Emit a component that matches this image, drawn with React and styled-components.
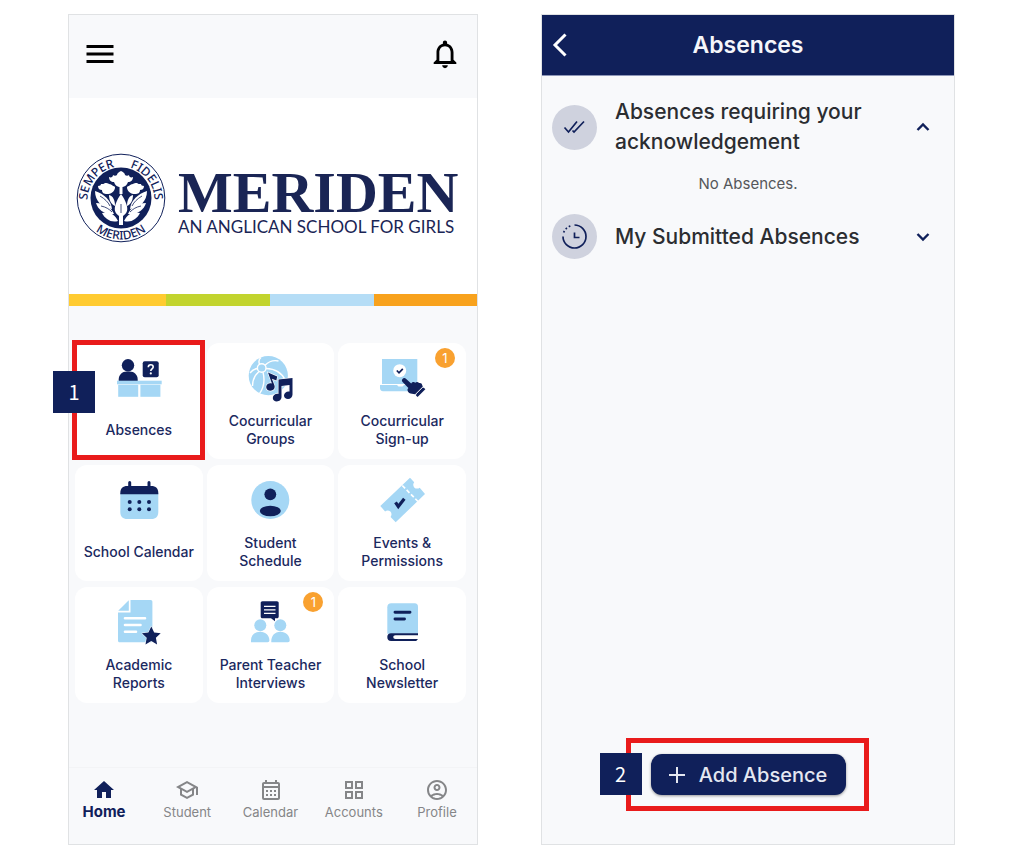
import { useState } from "react";
import styled, { createGlobalStyle } from "styled-components";
import {
  MdMenu,
  MdNotificationsNone,
  MdHome,
  MdOutlineSchool,
  MdOutlineCalendarMonth,
  MdOutlineGridView,
  MdOutlineAccountCircle,
} from "react-icons/md";

const navy = "#10205a";
const sky = "#a5d7f5";

const AbsencesIcon = () => (
  <svg viewBox="0 0 48 48">
    <circle cx="13" cy="11.3" r="6.2" fill={navy} />
    <path d="M3.7 27v-1.500c0-4.500 3.500-8 8-8h3c4.500 0 8 3.500 8 8V27z" fill={navy} />
    <rect x="27.7" y="7.3" width="16" height="16" rx="2" fill={navy} />
    <path d="M33.300 13.200c0-1.500 1-2.400 2.400-2.400s2.500.9 2.500 2.200c0 1.900-2.400 2-2.400 4" fill="none" stroke="#fff" strokeWidth="1.6" />
    <circle cx="35.8" cy="19.4" r="1.1" fill="#fff" />
    <rect x="2" y="26.7" width="44.7" height="3.6" fill={sky} />
    <rect x="3.2" y="30.8" width="20" height="12" fill={sky} />
    <rect x="25.4" y="30.8" width="20" height="12" fill={sky} />
  </svg>
);

const GroupsIcon = () => (
  <svg viewBox="0 0 48 48">
    <circle cx="22.3" cy="21.7" r="19.6" fill={sky} />
    <g fill="none" stroke="#fff" strokeWidth="1.4">
      <circle cx="15.7" cy="14" r="4.3" />
      <path d="M13.5 10.2C12.5 7.5 13 5 15 3.5M19 11.3c4-4 9-5.3 13.5-4.3M20 14.5c9 .2 16 4.5 19.5 12M17 18.2c2 8 .5 16-3.5 21.5M13 17.5C9 21 6.5 26 6.5 32M11.5 14.5c-3 .3-5.5 2-7.5 4.5" />
    </g>
    <g stroke="#fff" strokeWidth="1.2" fill={navy} paintOrder="stroke">
      <path d="M22 18.6l9.2 3.8-.8 4.2-4.5-1.8 2.6 6.8c.8 3-1.2 5.2-4 5.2-2.6 0-4.3-1.6-4.3-3.8 0-2.7 2.7-4.4 5.7-3.6z" />
      <path d="M32.5 25.5l14-1.5v16.5c0 2.6-2 4.6-4.5 4.6-2.3 0-4-1.5-4-3.6 0-2.7 2.7-4.5 5.5-4V31l-8 1v11c0 2.6-2.2 4.4-4.7 4.4-2.2 0-4-1.4-4-3.5 0-2.7 2.7-4.5 5.7-4z" />
    </g>
  </svg>
);

const SignupIcon = () => (
  <svg viewBox="0 0 48 48">
    <rect x="4" y="5" width="35.3" height="25" fill={sky} />
    <path d="M2 31h17l1.500 1.500h4L26 31h15v3c0 2-1 3.200-3 3.200H5c-2 0-3-1.200-3-3.200z" fill={sky} />
    <circle cx="21.7" cy="16.7" r="6.5" fill="#fff" />
    <path d="M18.800 16.500l2.200 2.300 3.800-4" fill="none" stroke={navy} strokeWidth="1.7" />
    <path d="M24.500 25c1-1.200 2.500-1.200 3.700 0l5 4.500c1.200-1.800 3-1.800 4-.8 1.500-1 3-.7 3.800.4 1.700-.5 2.900.3 3.200 1.900l1.200 4-5.800 5.800-7-1.200c-2-.5-3.300-2.200-3.100-4.300l.9-1.300-5.800-6c-.9-1-.9-2.200-.1-3z" fill={navy} />
    <path d="M38.700 42.200l7.800-7.800" stroke={navy} strokeWidth="2.4" />
    <path d="M37 40.800l7.800-7.800" stroke="#fff" strokeWidth="1" />
  </svg>
);

const CalendarIcon = () => (
  <svg viewBox="0 0 48 48">
    <path d="M5.300 17h38v19c0 4.500-2.500 7-7 7h-24c-4.500 0-7-2.500-7-7z" fill={sky} />
    <path d="M5.300 18.300V17c0-4.500 2.500-7 7-7h24c4.500 0 7 2.500 7 7v1.300z" fill={navy} />
    <path d="M14.700 6.500v6M34 6.500v6" stroke={navy} strokeWidth="3" strokeLinecap="round" />
    {[26, 33.3].map((y) =>
      [14.7, 24.3, 34].map((x) => <circle key={`${x}-${y}`} cx={x} cy={y} r="2" fill={navy} />)
    )}
  </svg>
);

const ScheduleIcon = () => (
  <svg viewBox="0 0 48 48">
    <circle cx="24.3" cy="24" r="19" fill={sky} />
    <circle cx="24.3" cy="18.3" r="5.9" fill={navy} />
    <ellipse cx="24.3" cy="35" rx="10.5" ry="5.2" fill={navy} />
  </svg>
);

const TicketIcon = () => (
  <svg viewBox="0 0 48 48">
    <path d="M32 1.700l4.200 4.500c-1.300 1.600-1.300 3.700 0 5.200 1.500 1.500 4 1.500 5.500.3L47 18 17.700 46.300 12.600 41c1.300-1.700 1.200-4-.2-5.400-1.500-1.400-3.800-1.400-5.300-.2L2.300 30z" fill={sky} />
    <path d="M24.300 9.500L40 25.500" stroke="#fff" strokeWidth="1.7" strokeDasharray="4 2.2" />
    <path d="M17.500 26.300l2.800 4.200 6-7.700" fill="none" stroke={navy} strokeWidth="3.2" />
  </svg>
);

const ReportIcon = () => (
  <svg viewBox="0 0 48 48">
    <path d="M15.500 2h20c1.300 0 1.900.7 1.900 1.900v38.500c0 1.300-.6 1.900-1.900 1.900H5c-1.300 0-2-.6-2-1.900V14.500h12.500z" fill={sky} />
    <path d="M13.800 2.200v10.600H3.200z" fill={sky} />
    <path d="M10 20.200h20M10 27h15.500M10 33.800h11" stroke="#fff" strokeWidth="2.6" strokeLinecap="round" />
    <path d="M36.300 28.500l2.900 6 6.500.8-4.800 4.500 1.200 6.600-5.800-3.300-5.800 3.300 1.200-6.600-4.800-4.500 6.500-.8z" fill={navy} stroke="#fff" strokeWidth="1" paintOrder="stroke" />
  </svg>
);

const InterviewIcon = () => (
  <svg viewBox="0 0 48 48">
    <path d="M16.500 3.300h14.400c1.200 0 1.800.7 1.800 1.800v13.400c0 1.200-.6 1.800-1.800 1.800H29v3l-4-3h-8.500c-1.200 0-1.800-.6-1.800-1.800V5.100c0-1.100.6-1.800 1.800-1.800z" fill={navy} />
    <path d="M18 8.300h11.500M18 11.800h11.500M18 15.300h11.500" stroke="#fff" strokeWidth="1.2" />
    <circle cx="14.3" cy="27.3" r="6" fill={sky} />
    <circle cx="34.3" cy="27.3" r="6" fill={sky} />
    <path d="M5 44.300v-2c0-5 3.700-8.600 9.200-8.600s9.200 3.600 9.200 8.600c0 1.300-.6 2-1.800 2zM25.300 44.300c-.3-6 3-10.600 9.100-10.600 5.500 0 9.300 3.600 9.300 8.600 0 1.300-.6 2-1.800 2z" fill={sky} />
  </svg>
);

const NewsletterIcon = () => (
  <svg viewBox="0 0 48 48">
    <path d="M13.300 5.300h23.400c2.200 0 3.300 1.300 3.300 3.400v27H9.300V9.300c0-2.600 1.400-4 4-4z" fill={sky} />
    <path d="M40 35.200H13c-2.400 0-3.700 1.400-3.700 3.900 0 2.600 1.300 4 3.700 4h25.200l1.800-2z" fill={navy} />
    <path d="M40 37.200H17.500c-1.400 0-2.200.7-2.200 1.900 0 1.300.8 2 2.200 2H40z" fill="#fff" />
    <path d="M17 14.300h15M17 21h9.500" stroke={navy} strokeWidth="2.9" strokeLinecap="round" />
  </svg>
);

const Crest = () => (
  <CrestSvg viewBox="0 0 90 90" aria-label="School crest">
    <defs>
      <path id="crest-top" d="M11.500 47a33.500 33.500 0 0 1 67 0" />
      <path id="crest-bottom" d="M3.500 45a41.500 41.500 0 0 0 83 0" />
    </defs>
    <circle cx="45" cy="45" r="43.8" fill="#fff" stroke={navy} strokeWidth="1" />
    <circle cx="45" cy="45" r="30.5" fill={navy} />
    <text>
      <textPath href="#crest-top" startOffset="0">SEMPER</textPath>
    </text>
    <text textAnchor="end">
      <textPath href="#crest-top" startOffset="100%">FIDELIS</textPath>
    </text>
    <text textAnchor="middle">
      <textPath href="#crest-bottom" startOffset="50%">MERIDEN</textPath>
    </text>
    <g fill="#fff">
      <path d="M45 34c-4 0-6-2-7-5-3 0-5-2-5-5 2 1 4 0 4-2 1 1 3 1 4 0 0-2 2-3 4-4 2 1 4 2 4 4 1 1 3 1 4 0 0 2 2 3 4 2 0 3-2 5-5 5-1 3-3 5-7 5z" />
      <path d="M43.500 32h3v9h-3z" />
      <g id="crest-side">
        <path d="M31 41c-3 0-5-1-5-4-2 0-4-1-4-4 2 0 3-1 3-2 2 0 3 0 4-1 2 0 3 0 4 1 2 0 3 1 4 2 2 0 2 1 2 2-1 4-4 6-8 6z" />
        <path d="M19 38c9 3 16 9 17 18-10-1-17-8-17-18z" />
        <path d="M20 50c8 0 15 4 18 11-9 1-16-4-18-11z" />
        <path d="M26 60c7-2 13 1 16 8-7 2-13-2-16-8z" />
        <path d="M33 42c4 1 6 5 6 11-4-2-6-6-6-11z" />
      </g>
      <use href="#crest-side" transform="matrix(-1 0 0 1 90 0)" />
      <path d="M45 41c5 7 7 13 6 17-1 3-3 4-4 5v9h-4v-9c-1-1-3-2-4-5-1-4 1-10 6-17z" />
    </g>
    <g fill="none" stroke={navy} strokeWidth="0.8">
      <path d="M45 51v9M24 43c5 3 8 6 10 10M66 43c-5 3-8 6-10 10M25 53c5 1 8 3 11 6M65 53c-5 1-8 3-11 6" />
    </g>
  </CrestSvg>
);

const tiles = [
  { label: "Absences", icon: AbsencesIcon, step: 1 },
  { label: "Cocurricular Groups", icon: GroupsIcon },
  { label: "Cocurricular Sign-up", icon: SignupIcon, badge: 1 },
  { label: "School Calendar", icon: CalendarIcon },
  { label: "Student Schedule", icon: ScheduleIcon },
  { label: "Events & Permissions", icon: TicketIcon },
  { label: "Academic Reports", icon: ReportIcon },
  { label: "Parent Teacher Interviews", icon: InterviewIcon, badge: 1 },
  { label: "School Newsletter", icon: NewsletterIcon },
];

const navItems = [
  { label: "Home", icon: MdHome, active: true },
  { label: "Student", icon: MdOutlineSchool },
  { label: "Calendar", icon: MdOutlineCalendarMonth },
  { label: "Accounts", icon: MdOutlineGridView },
  { label: "Profile", icon: MdOutlineAccountCircle },
];

const Chevron = ({ up }) => (
  <svg width="14" height="10" viewBox="0 0 14 10">
    <path d={up ? "M1.5 8L7 2.5 12.5 8" : "M1.5 2L7 7.5 12.5 2"} fill="none" stroke={navy} strokeWidth="2.4" />
  </svg>
);

const HomeScreen = () => (
  <Phone>
    <TopBar>
      <IconButton aria-label="Menu">
        <MdMenu size={36} />
      </IconButton>
      <IconButton aria-label="Notifications">
        <MdNotificationsNone size={34} />
      </IconButton>
    </TopBar>
    <Hero>
      <Crest />
      <Wordmark>
        <SchoolName>MERIDEN</SchoolName>
        <Tagline>AN ANGLICAN SCHOOL FOR GIRLS</Tagline>
      </Wordmark>
    </Hero>
    <Stripes>
      <Stripe $color="#ffcb31" />
      <Stripe $color="#c2d42e" />
      <Stripe $color="#b5ddf6" />
      <Stripe $color="#f8a21d" />
    </Stripes>
    <TileGrid>
      {tiles.map(({ label, icon: Icon, badge, step }) => (
        <Tile key={label}>
          <TileIcon>
            <Icon />
          </TileIcon>
          <TileLabel>{label}</TileLabel>
          {badge && <Badge>{badge}</Badge>}
          {step && (
            <TileHighlight>
              <StepNumber>{step}</StepNumber>
            </TileHighlight>
          )}
        </Tile>
      ))}
    </TileGrid>
    <BottomNav>
      {navItems.map(({ label, icon: Icon, active }) => (
        <NavLink key={label} href="#" $active={active}>
          <Icon size={24} />
          <span>{label}</span>
        </NavLink>
      ))}
    </BottomNav>
  </Phone>
);

const AbsencesScreen = () => {
  const [pendingOpen, setPendingOpen] = useState(true);
  const [submittedOpen, setSubmittedOpen] = useState(false);

  return (
    <Phone>
      <TitleBar>
        <IconButton aria-label="Back">
          <svg width="16" height="24" viewBox="0 0 16 24">
            <path d="M13.5 1.5L3 12l10.500 10.500" fill="none" stroke="#fff" strokeWidth="3" />
          </svg>
        </IconButton>
        <Title>Absences</Title>
      </TitleBar>
      <Sections>
        <SectionButton aria-expanded={pendingOpen} onClick={() => setPendingOpen(!pendingOpen)}>
          <RoundIcon viewBox="0 0 45 45">
            <circle cx="22.5" cy="22.5" r="22.5" fill="#cfd2de" />
            <path d="M12.500 22.500l4 4.500L25 16.500M20.500 25.500l1.500 1.500L32 16.500" fill="none" stroke={navy} strokeWidth="1.7" />
          </RoundIcon>
          <SectionTitle>Absences requiring your acknowledgement</SectionTitle>
          <Chevron up={pendingOpen} />
        </SectionButton>
        {pendingOpen && <EmptyNote>No Absences.</EmptyNote>}
        <SectionButton aria-expanded={submittedOpen} onClick={() => setSubmittedOpen(!submittedOpen)}>
          <RoundIcon viewBox="0 0 45 45">
            <circle cx="22.5" cy="22.5" r="22.5" fill="#cfd2de" />
            <g fill="none" stroke={navy} strokeWidth="1.7">
              <path d="M22.500 11a11.500 11.500 0 1 1-11.500 11.500" />
              <path d="M11.700 18.500a11.500 11.500 0 0 1 8-7" strokeDasharray="1.7 2.2" />
              <path d="M22.500 18.500v5h5" />
            </g>
          </RoundIcon>
          <SectionTitle>My Submitted Absences</SectionTitle>
          <Chevron up={submittedOpen} />
        </SectionButton>
      </Sections>
      <Footer>
        <ActionWrap>
          <AddButton>
            <svg width="16" height="16" viewBox="0 0 16 16">
              <path d="M8 0v16M0 8h16" stroke="currentColor" strokeWidth="2" />
            </svg>
            Add Absence
          </AddButton>
          <ActionHighlight>
            <StepNumber $action>2</StepNumber>
          </ActionHighlight>
        </ActionWrap>
      </Footer>
    </Phone>
  );
};

const App = () => (
  <>
    <GlobalStyle />
    <Page>
      <HomeScreen />
      <AbsencesScreen />
    </Page>
  </>
);

const GlobalStyle = createGlobalStyle`
  *, *::before, *::after {
    box-sizing: border-box;
  }

  body {
    margin: 0;
    background: #fff;
    font-family: Inter, "Liberation Sans", sans-serif;
  }

  button {
    font: inherit;
    color: inherit;
    border: none;
    padding: 0;
    background: none;
    cursor: pointer;
  }

  h1, h2, p {
    margin: 0;
  }

  svg {
    display: block;
  }
`;

const Page = styled.main`
  display: grid;
  grid-template-columns: 410fr 414fr;
  gap: 63px;
  min-height: 100vh;
  padding: 14px 69px 22px 68px;
`;

const Phone = styled.section`
  display: flex;
  flex-direction: column;
  min-width: 0;
  border: 1px solid #e0e2e4;
  background: #f8f9fb;
`;

const TopBar = styled.header`
  display: flex;
  align-items: center;
  justify-content: space-between;
  height: 83px;
  padding: 0 15px 6px 13px;
`;

const IconButton = styled.button`
  display: flex;
`;

const Hero = styled.div`
  display: flex;
  align-items: center;
  gap: 12px;
  height: 196px;
  padding: 4px 8px 0 7px;
  background: #fff;
`;

const CrestSvg = styled.svg`
  width: 90px;
  height: 90px;
  flex-shrink: 0;

  text {
    font: 500 12px "Noto Sans", sans-serif;
    fill: ${navy};
  }
`;

const Wordmark = styled.div`
  display: flex;
  flex-direction: column;
  gap: 2px;
  padding-top: 14px;
  color: #1a2555;
  white-space: nowrap;
`;

const SchoolName = styled.h1`
  font: bold 58px/42px "Liberation Serif", serif;
`;

const Tagline = styled.p`
  font: 17px/22px Lato, sans-serif;
`;

const Stripes = styled.div`
  display: grid;
  grid-template-columns: 97fr 104fr 104fr 103fr;
  height: 12px;
`;

const Stripe = styled.div`
  background: ${(props) => props.$color};
`;

const TileGrid = styled.div`
  display: grid;
  grid-template-columns: repeat(3, 1fr);
  gap: 6px 4px;
  padding: 37px 11px 24px 6px;
`;

const Tile = styled.button`
  position: relative;
  display: flex;
  flex-direction: column;
  align-items: center;
  gap: 10px;
  min-height: 116px;
  padding: 11px 4px;
  border-radius: 12px;
  background: #fff;
`;

const TileIcon = styled.span`
  width: 48px;
  height: 48px;
`;

const TileLabel = styled.span`
  display: flex;
  align-items: center;
  justify-content: center;
  max-width: 116px;
  min-height: 36px;
  color: #1b2960;
  font-size: 14px;
  font-weight: 500;
  line-height: 18px;
  text-align: center;
`;

const Badge = styled.span`
  position: absolute;
  top: 5px;
  right: 11px;
  width: 20px;
  height: 20px;
  border-radius: 50%;
  background: #f9a130;
  color: #fff;
  font-size: 13px;
  line-height: 20px;
  text-align: center;
`;

const Highlight = styled.span`
  position: absolute;
  border: 5px solid #e91b1b;
  pointer-events: none;
`;

const TileHighlight = styled(Highlight)`
  inset: -3px -2px -1px -3px;
`;

const ActionHighlight = styled(Highlight)`
  inset: -16px -23px -16px -25px;
`;

const StepNumber = styled.span`
  position: absolute;
  top: ${(props) => (props.$action ? "10px" : "26px")};
  left: ${(props) => (props.$action ? "-31px" : "-24px")};
  width: 42px;
  height: 42px;
  background: ${navy};
  color: #fff;
  font: 20px/42px "Noto Sans CJK SC", sans-serif;
  text-align: center;
`;

const BottomNav = styled.nav`
  display: flex;
  justify-content: space-between;
  height: 77px;
  margin-top: auto;
  padding: 10px 12px 0 7px;
  border-top: 1px solid #f3f4f6;
`;

const NavLink = styled.a`
  display: flex;
  flex-direction: column;
  align-items: center;
  width: 56px;
  color: ${(props) => (props.$active ? navy : "#858688")};
  font-size: ${(props) => (props.$active ? "15px" : "13px")};
  font-weight: ${(props) => (props.$active ? 700 : 400)};
  line-height: 20px;
  text-decoration: none;
`;

const TitleBar = styled.header`
  display: grid;
  grid-template-columns: 40px 1fr 40px;
  align-items: center;
  height: 61px;
  padding: 0 10px;
  border-bottom: 1px solid #8d96b8;
  background: ${navy};
`;

const Title = styled.h2`
  color: #f5f6fa;
  font-size: 23px;
  font-weight: 600;
  line-height: 30px;
  text-align: center;
`;

const Sections = styled.div`
  display: flex;
  flex-direction: column;
  gap: 17px;
  padding: 21px 24px 24px 10px;
`;

const SectionButton = styled.button`
  display: flex;
  align-items: center;
  gap: 18px;
  min-height: 45px;
  text-align: left;
`;

const RoundIcon = styled.svg`
  width: 45px;
  height: 45px;
  flex-shrink: 0;
`;

const SectionTitle = styled.span`
  flex: 1;
  color: #2b2d31;
  font-size: 21px;
  font-weight: 500;
  line-height: 30px;
`;

const EmptyNote = styled.p`
  padding: 0 0 3px 14px;
  color: #55575a;
  font-size: 15px;
  line-height: 20px;
  text-align: center;
`;

const Footer = styled.footer`
  display: flex;
  justify-content: center;
  margin-top: auto;
  padding-bottom: 49px;
`;

const ActionWrap = styled.div`
  position: relative;
`;

const AddButton = styled.button`
  display: flex;
  align-items: center;
  justify-content: center;
  gap: 14px;
  min-width: 195px;
  height: 41px;
  border-radius: 11px;
  background: ${navy};
  box-shadow: 0 1px 3px rgba(0, 0, 0, 0.4);
  color: #e4e7f1;
  font-size: 20px;
  font-weight: 500;
`;

export default App;
